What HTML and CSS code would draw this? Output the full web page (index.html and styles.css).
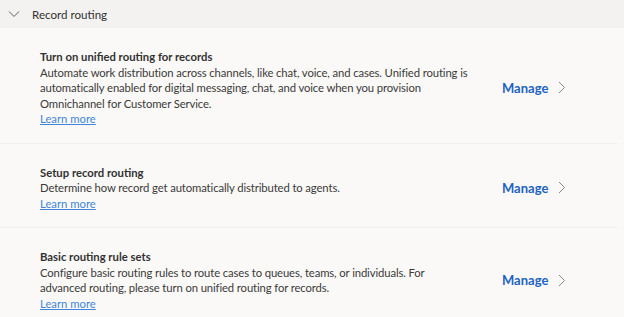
FILE: index.html
```html
<!DOCTYPE html>
<html lang="en">
<head>
<meta charset="utf-8">
<link rel="stylesheet" href="styles.css">
</head>
<body>
<section class="section">
  <header class="section-head">
    <svg class="head-chevron" width="12" height="8" viewBox="0 0 12 8"><path d="M1 1.5 L6 6.5 L11 1.5" fill="none" stroke="#605e5c" stroke-width="1"/></svg>
    <span class="head-title">Record routing</span>
  </header>
  <div class="cards">
    <div class="card">
      <div class="card-text">
        <div class="card-title">Turn on unified routing for records</div>
        <div class="card-desc">Automate work distribution across channels, like chat, voice, and cases. Unified routing is automatically enabled for digital messaging, chat, and voice when you provision Omnichannel for Customer Service.</div>
        <a class="learn" href="#">Learn more</a>
      </div>
      <a class="manage" href="#">Manage <svg class="manage-chevron" width="8" height="13" viewBox="0 0 8 13"><path d="M1 1 L6.5 6.5 L1 12" fill="none" stroke="#8a8886" stroke-width="1"/></svg></a>
    </div>
    <div class="card">
      <div class="card-text">
        <div class="card-title">Setup record routing</div>
        <div class="card-desc">Determine how record get automatically distributed to agents.</div>
        <a class="learn" href="#">Learn more</a>
      </div>
      <a class="manage" href="#">Manage <svg class="manage-chevron" width="8" height="13" viewBox="0 0 8 13"><path d="M1 1 L6.5 6.5 L1 12" fill="none" stroke="#8a8886" stroke-width="1"/></svg></a>
    </div>
    <div class="card">
      <div class="card-text">
        <div class="card-title">Basic routing rule sets</div>
        <div class="card-desc">Configure basic routing rules to route cases to queues, teams, or individuals. For advanced routing, please turn on unified routing for records.</div>
        <a class="learn" href="#">Learn more</a>
      </div>
      <a class="manage" href="#">Manage <svg class="manage-chevron" width="8" height="13" viewBox="0 0 8 13"><path d="M1 1 L6.5 6.5 L1 12" fill="none" stroke="#8a8886" stroke-width="1"/></svg></a>
    </div>
  </div>
</section>
</body>
</html>
```
FILE: styles.css
```css
html, body {
  margin: 0;
  padding: 0;
  background: #faf9f8;
  font-family: "Lato", "Noto Sans", sans-serif;
  color: #323130;
}
.section-head {
  height: 28px;
  background: #f3f2f1;
  display: flex;
  align-items: center;
  padding-left: 8px;
  box-sizing: border-box;
}
.head-chevron {
  display: block;
  margin-right: 12px;
}
.head-title {
  font-size: 11.6px;
  color: #323130;
}
.cards {
  padding-right: 7px;
}
.card {
  display: grid;
  grid-template-columns: 433px auto;
  column-gap: 29px;
  align-items: center;
  padding: 21px 0 16px 40px;
  border-bottom: 1px solid #f0efee;
}
.card-text {
  font-size: 11.3px;
  line-height: 15.5px;
}
.card-title {
  font-weight: 700;
}
.card-desc {
  color: #3b3a39;
  letter-spacing: -0.12px;
}
.learn {
  color: #3f86d8;
  text-decoration: underline;
}
.manage {
  display: flex;
  align-items: center;
  gap: 10px;
  color: #1d63c1;
  font-weight: 700;
  font-size: 13px;
  text-decoration: none;
}
.manage-chevron {
  display: block;
}
```
